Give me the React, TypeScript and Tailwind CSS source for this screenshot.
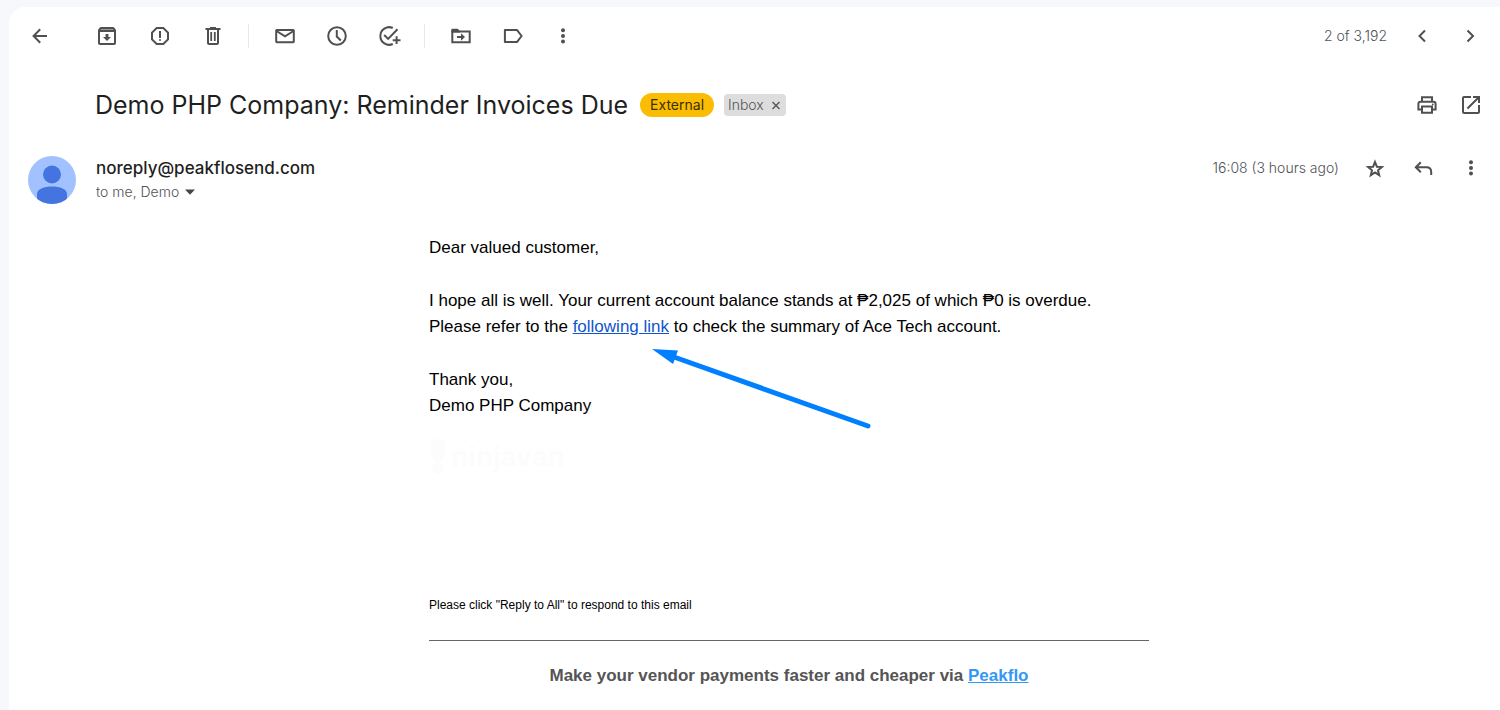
import React from "react";
import { MdOutlineArchive, MdOutlineReport, MdOpenInNew } from "react-icons/md";

const stroke = {
  viewBox: "0 0 24 24",
  fill: "none",
  stroke: "currentColor",
  strokeWidth: 2,
  className: "w-6 h-6",
};

const BackIcon = () => (
  <svg {...stroke}><path d="M19 12H6M12.200 5.200L5.600 12l6.600 6.800" /></svg>
);

const ArchiveIcon = () => (
  <span className="relative">
    <svg viewBox="0 0 24 24" className="absolute inset-0 w-6 h-6"><path d="M5 4.500h14l1 2.500H4z" fill="#9a9a9a" /></svg>
    <MdOutlineArchive className="relative w-6 h-6" />
  </span>
);

const TrashIcon = () => (
  <svg viewBox="0 0 24 24" fill="currentColor" className="w-6 h-6">
    <path d="M15 4V3H9v1H4.500v2H6v13c0 1.100.9 2 2 2h8c1.100 0 2-.9 2-2V6h1.500V4H15zm1 15H8V6h8v13z" />
    <path d="M9.300 8h1.800v9H9.300zM12.900 8h1.800v9h-1.800z" />
  </svg>
);

const MailIcon = () => (
  <svg {...stroke}>
    <rect x="3.2" y="6" width="17.600" height="12.200" rx="0.6" />
    <path d="M3.500 7l8.500 5.300L20.500 7" />
  </svg>
);

const ClockIcon = () => (
  <svg {...stroke}>
    <circle cx="12" cy="12" r="8.800" />
    <path d="M11.800 6v6.500l4 4" />
  </svg>
);

const TaskIcon = () => (
  <svg {...stroke}>
    <path d="M15.800 4A8.800 8.800 0 1 0 15.800 20" />
    <path d="M7.200 11l3.900 3.900L20.500 5.300M15.700 16.200h7.800M19.600 12.300v7.800" />
  </svg>
);

const MoveIcon = () => (
  <svg {...stroke}>
    <path d="M3.300 7.500h17.400v10.700H3.300z" />
    <path d="M2.300 8.500V6c0-.8.5-1.300 1.200-1.300h5.200l2.200 2.200v1.600z" fill="currentColor" stroke="none" />
    <path d="M8 13h5" />
    <path d="M12 9.200l4 3.800-4 3.800z" fill="currentColor" stroke="none" />
  </svg>
);

const LabelIcon = () => (
  <svg {...stroke} strokeLinejoin="round">
    <path d="M4.900 5.900h12l4.700 6.100-4.700 6.100h-12z" />
  </svg>
);

const MoreIcon = () => (
  <svg viewBox="0 0 24 24" fill="currentColor" className="w-6 h-6">
    <circle cx="12" cy="6.300" r="2" />
    <circle cx="12" cy="12" r="2" />
    <circle cx="12" cy="17.600" r="2" />
  </svg>
);

const PrevIcon = () => (
  <svg {...stroke}><path d="M14 6.500L8.500 12l5.500 5.500" /></svg>
);

const NextIcon = () => (
  <svg {...stroke}><path d="M8.500 6.500l5.500 5.500-5.500 5.500" /></svg>
);

const PrintIcon = () => (
  <svg {...stroke}>
    <path d="M7 8.500V4.200h10v4.300M6.500 16.500H3.400v-5.500c0-1.300.9-2.300 2.200-2.300h12.800c1.300 0 2.200 1 2.200 2.300v5.500h-3.100" />
    <path d="M7 13.500h10v6.300H7z" />
    <circle cx="17.800" cy="11.400" r="0.9" fill="currentColor" stroke="none" />
  </svg>
);

const StarIcon = () => (
  <svg {...stroke}>
    <path d="M12 6l1.900 4.700 5 .4-3.900 3.200 1.200 4.900-4.200-2.700-4.200 2.700L9 14.300l-3.900-3.200 5-.4z" />
  </svg>
);

const ReplyIcon = () => (
  <svg {...stroke}>
    <path d="M9.800 6.300L4.800 11.300l5 5M5 11.300h10.500c2.800 0 4.700 1.900 4.700 4.700v3" />
  </svg>
);

const Avatar = () => (
  <svg viewBox="0 0 48 48" className="w-12 h-12 shrink-0">
    <clipPath id="avatar-clip"><circle cx="24" cy="24" r="24" /></clipPath>
    <g clipPath="url(#avatar-clip)">
      <rect width="48" height="48" fill="#a1c2fe" />
      <circle cx="24" cy="18.500" r="9" fill="#4374e0" />
      <path d="M9 48V38c0-5 7-7.500 15-7.500S39 33 39 38v10z" fill="#4374e0" />
    </g>
  </svg>
);

const toolbarGroups = [
  {
    gap: "gap-[29px]",
    items: [
      { label: "Archive", icon: <ArchiveIcon /> },
      { label: "Report spam", icon: <MdOutlineReport className="w-6 h-6" /> },
      { label: "Delete", icon: <TrashIcon /> },
    ],
  },
  {
    gap: "gap-7",
    items: [
      { label: "Mark as unread", icon: <MailIcon /> },
      { label: "Snooze", icon: <ClockIcon /> },
      { label: "Add to tasks", icon: <TaskIcon /> },
    ],
  },
  {
    gap: "gap-[27px]",
    items: [
      { label: "Move to", icon: <MoveIcon /> },
      { label: "Labels", icon: <LabelIcon /> },
      { label: "More", icon: <MoreIcon /> },
    ],
  },
];

const IconButton = ({ label, children }: { label: string; children: React.ReactNode }) => (
  <button type="button" aria-label={label} className="w-6 h-6 shrink-0 flex items-center justify-center text-[#505050]">
    {children}
  </button>
);

const Toolbar = () => (
  <div className="flex items-center justify-between pt-[17px]">
    <div className="flex items-center">
      <div className="mr-[43px] flex">
        <IconButton label="Back"><BackIcon /></IconButton>
      </div>
      {toolbarGroups.map((group, index) => (
        <React.Fragment key={index}>
          {index > 0 && <div className="w-px h-6 bg-[#e6eaea] ml-[23px] mr-6"></div>}
          <div className={`flex items-center ${group.gap}`}>
            {group.items.map((item) => (
              <IconButton key={item.label} label={item.label}>{item.icon}</IconButton>
            ))}
          </div>
        </React.Fragment>
      ))}
    </div>
    <div className="flex items-center gap-6">
      <span className="text-sm text-[#505357] font-light">2 of 3,192</span>
      <IconButton label="Newer"><PrevIcon /></IconButton>
      <IconButton label="Older"><NextIcon /></IconButton>
    </div>
  </div>
);

const SubjectRow = () => (
  <div className="flex items-center justify-between pl-[67px] mt-[41px]">
    <div className="flex items-center">
      <h1 className="text-[25px] leading-8 font-normal text-[#1f1f1f]">Demo PHP Company: Reminder Invoices Due</h1>
      <span className="ml-3 h-6 px-[10px] flex items-center rounded-full bg-[#fbbc04] text-sm text-[#3c3000]">External</span>
      <span className="ml-[10px] h-[22px] px-1 flex items-center gap-[6px] rounded bg-[#dddddd] text-sm font-light text-[#555555]">
        Inbox
        <button type="button" aria-label="Remove label Inbox" className="w-3 h-3">
          <svg viewBox="0 0 12 12" fill="none" stroke="currentColor" strokeWidth="1.400" className="w-3 h-3">
            <path d="M2.500 3l7 7M9.500 3l-7 7" />
          </svg>
        </button>
      </span>
    </div>
    <div className="flex items-center gap-5">
      <IconButton label="Print all"><PrintIcon /></IconButton>
      <IconButton label="Open in new window"><MdOpenInNew className="w-6 h-6" /></IconButton>
    </div>
  </div>
);

const SenderRow = () => (
  <div className="flex items-start mt-[35px]">
    <Avatar />
    <div className="ml-5 flex-1">
      <div className="text-[17px] leading-6 font-medium text-[#1f1f1f]">noreply@peakflosend.com</div>
      <div className="flex items-center text-sm leading-6 font-light text-[#505357]">
        to me, Demo
        <button type="button" aria-label="Show details" className="ml-[6px]">
          <svg viewBox="0 0 10 6" className="w-[10px] h-[6px]"><path d="M0 0.500h10L5 5.800z" fill="#444746" /></svg>
        </button>
      </div>
    </div>
    <div className="flex items-center gap-6">
      <span className="text-sm text-[#505357] font-light">16:08 (3 hours ago)</span>
      <IconButton label="Star"><StarIcon /></IconButton>
      <IconButton label="Reply"><ReplyIcon /></IconButton>
      <IconButton label="More message options"><MoreIcon /></IconButton>
    </div>
  </div>
);

const MessageBody = () => (
  <div className="pl-[67px] mt-[31px]">
    <div className="max-w-[720px] mx-auto text-black font-['Liberation_Sans',Arial,sans-serif]">
      <div className="relative flex flex-col gap-[27px] text-[17px] leading-[26px]">
        <p>Dear valued customer,</p>
        <p>
          I hope all is well. Your current account balance stands at ₱2,025 of which ₱0 is overdue.
          <br />
          Please refer to the <a href="#summary" className="text-[#1155cc] underline">following link</a> to check the summary of Ace Tech account.
        </p>
        <p>
          Thank you,
          <br />
          Demo PHP Company
        </p>
        {/* arrow pointing at the summary link */}
        <svg viewBox="0 0 222 82" className="absolute left-[223px] top-[113px] w-[222px] h-[82px]">
          <path d="M22 9L216 78" stroke="#0080ff" strokeWidth="5" strokeLinecap="round" />
          <path d="M0 1l26 1.500-5 13.500z" fill="#0080ff" />
        </svg>
      </div>

      <div className="mt-[18px] h-10 flex items-center gap-1 text-[#fcfcfc]">
        <svg viewBox="0 0 18 36" fill="currentColor" className="w-[18px] h-9">
          <path d="M1 7c0-5 3-7 8-7s8 2 8 7c0 7-3 12-5 16H6C4 19 1 14 1 7z" />
          <circle cx="9" cy="29" r="6" />
        </svg>
        <span className="text-[28px] leading-9 font-bold">ninjavan</span>
      </div>

      <p className="mt-[118px] text-xs leading-5">Please click "Reply to All" to respond to this email</p>
      <hr className="mt-[25px] border-[#666666]" />
      <p className="mt-6 pb-6 text-center text-[17px] leading-[22px] font-bold text-[#555555]">
        Make your vendor payments faster and cheaper via{" "}
        <a href="#peakflo" className="text-[#3498f5] underline">Peakflo</a>
      </p>
    </div>
  </div>
);

const App = () => {
  return (
    <div className="min-h-screen flex flex-col bg-[#f6f8fc] pt-[7px] pl-[9px] font-[Inter,Roboto,sans-serif]">
      <main className="flex-1 bg-white rounded-tl-2xl pl-[19px] pr-[17px]">
        <Toolbar />
        <SubjectRow />
        <SenderRow />
        <MessageBody />
      </main>
    </div>
  );
};

export default App;
